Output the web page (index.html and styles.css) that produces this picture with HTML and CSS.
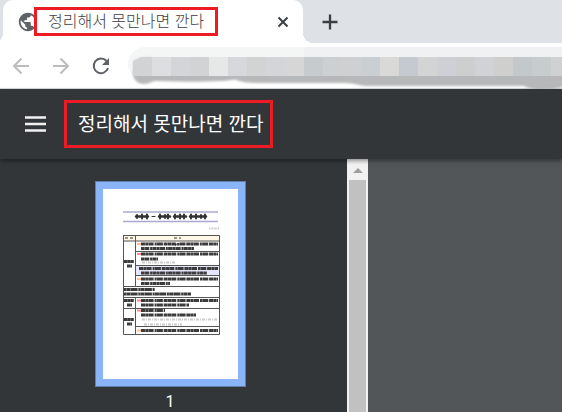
FILE: index.html
```html
<!DOCTYPE html>
<html lang="ko">
<head>
  <meta charset="UTF-8">
  <title>정리해서 못만나면 깐다</title>
  <link rel="stylesheet" href="styles.css">
</head>
<body>
  <div class="tab-strip">
    <div class="tab">
      <svg class="globe" viewBox="0 0 24 24" width="22" height="22"><path fill="#5f6368" d="M12 2C6.480 2 2 6.480 2 12s4.480 10 10 10 10-4.480 10-10S17.520 2 12 2zm-1 17.930c-3.950-.490-7-3.850-7-7.930 0-.620.080-1.210.210-1.790L9 15v1c0 1.100.900 2 2 2v1.930zm6.900-2.540c-.260-.810-1-1.390-1.900-1.390h-1v-3c0-.550-.450-1-1-1H8v-2h2c.550 0 1-.450 1-1V7h2c1.100 0 2-.900 2-2v-.410c2.930 1.190 5 4.060 5 7.410 0 2.080-.800 3.970-2.100 5.390z"/></svg>
      <span class="tab-title marked">정리해서 못만나면 깐다</span>
      <button class="icon-btn close" aria-label="닫기"><svg viewBox="0 0 12 12" width="12" height="12"><path d="M1.500 1.500l9 9M10.500 1.500l-9 9" stroke="#3c4043" stroke-width="2"/></svg></button>
    </div>
    <button class="icon-btn new-tab" aria-label="새 탭"><svg viewBox="0 0 16 16" width="16" height="16"><path d="M8 .5v15M.5 8h15" stroke="#3c4043" stroke-width="2.300"/></svg></button>
  </div>

  <div class="toolbar">
    <button class="icon-btn" aria-label="뒤로"><svg viewBox="0 0 18 18" width="18" height="18"><path d="M17 9H2.500M9.500 1.500L2 9l7.500 7.500" fill="none" stroke="#babcbe" stroke-width="2"/></svg></button>
    <button class="icon-btn" aria-label="앞으로"><svg viewBox="0 0 18 18" width="18" height="18"><path d="M1 9h14.500M8.500 1.500L16 9l-7.500 7.500" fill="none" stroke="#babcbe" stroke-width="2"/></svg></button>
    <button class="icon-btn" aria-label="새로고침"><svg viewBox="0 0 18 18" width="18" height="18"><path d="M14.500 4A7.300 7.300 0 1 0 16 11" fill="none" stroke="#5f6368" stroke-width="2"/><path d="M17 1v7h-7z" fill="#5f6368"/></svg></button>
    <svg class="address" viewBox="0 0 434 46" preserveAspectRatio="xMinYMin slice">
      <defs><filter id="soft" x="-5%" y="-20%" width="110%" height="140%"><feGaussianBlur stdDeviation="1"/></filter></defs>
      <path fill="#f4f6f6" d="M434 4H18C7 4 0 12 0 20s4 12 10 14h424z"/>
      <path fill="#f0f1f2" d="M176 4h258v10H176z"/>
      <path fill="#d7d8d8" filter="url(#soft)" d="M5 20c3-5 9-6 18-6v18H5z"/>
      <path fill="#b7b8b9" filter="url(#soft)" d="M5 30c0 7 5 11 11 11 5 0 8-3 12-3 24 1 50 1 66 0 6 0 10-2 14-1 5 2 12 3 20 3h88c12 0 14 3 24 3h156c8 5 28 4 44 0V28H5z"/>
      <path fill="#d2d3d4" d="M5 18l8-4h11v19H5z"/>
      <path fill="#dddee0" d="M24 14h19v19H24z"/>
      <path fill="#d4d5d8" d="M43 14h19v19H43z"/>
      <path fill="#d2d3d5" d="M62 14h19v19H62z"/>
      <path fill="#e6e8e8" d="M81 14h19v19H81z"/>
      <path fill="#d7d8db" d="M100 14h19v19h-19z"/>
      <path fill="#d2d4d3" d="M119 14h19v19h-19z"/>
      <path fill="#d2d6d9" d="M138 14h19v19h-19z"/>
      <path fill="#d6d6d6" d="M157 14h19v19h-19z"/>
      <path fill="#c6cbce" d="M176 14h19v19h-19z"/>
      <path fill="#cdd0d1" d="M195 14h19v19h-19z"/>
      <path fill="#cfd0d2" d="M214 14h19v19h-19z"/>
      <path fill="#cacfd2" d="M233 14h19v19h-19z"/>
      <path fill="#d9d9d7" d="M252 14h19v19h-19z"/>
      <path fill="#c5c9d0" d="M271 14h19v19h-19z"/>
      <path fill="#d3d5d5" d="M290 14h19v19h-19z"/>
      <path fill="#cfd0d5" d="M309 14h19v19h-19z"/>
      <path fill="#cccfcd" d="M328 14h19v19h-19z"/>
      <path fill="#d1d2d5" d="M347 14h19v19h-19z"/>
      <path fill="#cfcfcd" d="M366 14h19v19h-19z"/>
      <path fill="#c3c8ca" d="M385 14h19v19h-19z"/>
      <path fill="#c7cccd" d="M404 14h19v19h-19z"/>
      <path fill="#cfd1d2" d="M423 14h19v19h-19z"/>
    </svg>
  </div>

  <header class="pdf-header">
    <button class="icon-btn" aria-label="메뉴"><svg viewBox="0 0 21 16" width="21" height="16"><path d="M0 1.500h21M0 8h21M0 14.500h21" stroke="#f1f1f1" stroke-width="2.500"/></svg></button>
    <h1 class="pdf-title marked">정리해서 못만나면 깐다</h1>
  </header>

  <main class="viewer">
    <aside class="sidebar">
      <a class="thumb" href="#page1" aria-label="1 페이지">
        <svg viewBox="0 0 135 190">
          <path fill="#fff" d="M0 0h135v190H0z"/>
          <path d="M20 23h95M20 32.500h95" stroke="#aaa9cf" stroke-width="1.500"/>
          <g stroke="#333" stroke-linecap="round">
            <path d="M33 27.500h12M56 27.500h11M71 27.500h12M87 27.500h16" stroke-width="2.500"/>
            <path d="M34 26v3M39 25.500v4M44 25.500v4M57 25.500v4M62 26v3M65 25.500v4M72 25.500v4M77 25.500v4M81 25.500v4M88 25.500v4M93 25.500v4M98 26v3M102 25.500v4" stroke-width="2"/>
            <path d="M49 27.500h3" stroke-width="1"/>
          </g>
          <path d="M106 39.500h10" stroke="#ccc" stroke-width="2" stroke-dasharray="1 .5"/>
          <path fill="#fff8e8" d="M20 46h97v6H20z"/>
          <path fill="#e6e6fa" d="M32 77h85v9H32z"/>
          <g fill="none" stroke="#555">
            <path d="M20 46.500h96.500v99H20.500v-99M20 52h96M32.500 46v51M32 62.500h84M32 76.500h84M32 86.500h84M20 97.500h96M20 108.500h96M20 119.500h96M32 137.500h84M32.500 108v38"/>
          </g>
          <path d="M22 49h8M71 49h7" stroke="#99948b" stroke-width="2" stroke-dasharray="3 2"/>
          <g stroke="#3b3b3b" stroke-width="2.800">
            <path d="M38 55h34l1 .5 5-.5h37M38 65h77M36 79.500h79M38 90h77" stroke-dasharray="4 .3 3 .3 5 1 2 .3 6 .8"/>
            <path d="M38 59.500h53M38 70h17M38 84h66M38 94.500h29" stroke-dasharray="3 .3 5 .8 2 .3 4 .3"/>
            <path d="M21 100.500h31M21 105h67" stroke-dasharray="2 .3 4 .3 7 .7"/>
            <path d="M38 111.500h77M38 116h48M38 121.500h24M38 126h55M38 141.500h77" stroke-dasharray="4 .3 3 .3 5 1 2 .3 6 .8"/>
            <path d="M21 72.500h10M24 77h5M21 111.500h10M24 116h5M21 130.500h10M24 135h5" stroke-dasharray="3 .2"/>
          </g>
          <path d="M39 73.500h34M39 130.500h76M41 135.500h38" stroke="#ccc" stroke-width="2" stroke-dasharray="3 1 1 1"/>
          <path d="M34 55h4M34 90h4M34 141.500h4" stroke="#ffbd91" stroke-width="2"/>
          <path d="M34 65h4M34 111.500h4M34 121.500h4" stroke="#ff8d8d" stroke-width="2"/>
        </svg>
      </a>
      <span class="page-number">1</span>
    </aside>
    <div class="scrollbar">
      <svg viewBox="0 0 21 21" width="21" height="21"><path d="M6 14l5-5 5 5z" fill="#a0a0a0"/></svg>
      <div class="scroll-thumb"></div>
    </div>
    <div class="document"></div>
  </main>
</body>
</html>
```

FILE: styles.css
```css
* {
  box-sizing: border-box;
}
body {
  margin: 0;
  height: 100vh;
  display: flex;
  flex-direction: column;
  overflow: hidden;
  background: #525659;
  font-family: "Noto Sans CJK KR", sans-serif;
}
svg {
  display: block;
}
.icon-btn {
  display: flex;
  padding: 0;
  border: none;
  background: none;
  cursor: pointer;
}
.marked {
  border: 3px solid #ed1c24;
}
.tab-strip {
  display: flex;
  align-items: center;
  flex: none;
  height: 43px;
  padding-left: 3px;
  background: #dee1e6;
}
.tab {
  position: relative;
  display: flex;
  align-items: center;
  width: 300px;
  height: 43px;
  padding: 0 14px;
  border-radius: 10px 10px 0 0;
  background: #fff;
}
.tab::before,
.tab::after {
  content: "";
  position: absolute;
  bottom: 0;
  width: 10px;
  height: 10px;
}
.tab::before {
  right: 100%;
  background: radial-gradient(circle at 0 0, transparent 10px, #fff 10px);
}
.tab::after {
  left: 100%;
  background: radial-gradient(circle at 100% 0, transparent 10px, #fff 10px);
}
.globe {
  flex: none;
}
.tab-title {
  width: 184px;
  height: 29px;
  margin-left: -5px;
  padding-left: 11px;
  font-size: 16px;
  font-weight: 300;
  line-height: 21px;
  white-space: nowrap;
  color: #3c4043;
  background: #fff;
  z-index: 1;
}
.close {
  margin-left: auto;
}
.new-tab {
  margin-left: 19px;
}
.toolbar {
  display: flex;
  align-items: center;
  flex: none;
  gap: 22px;
  height: 46px;
  padding-left: 12px;
  border-bottom: 1px solid #dadce0;
  background: #fff;
}
.address {
  flex: 1;
  min-width: 0;
  height: 46px;
  margin-left: -4px;
}
.pdf-header {
  display: flex;
  align-items: center;
  flex: none;
  gap: 18px;
  height: 70px;
  padding-left: 25px;
  background: #323639;
  box-shadow: 0 2px 4px rgba(0, 0, 0, 0.4);
  z-index: 1;
}
.pdf-title {
  width: 209px;
  height: 48px;
  margin: 0;
  padding-left: 11px;
  font-size: 19px;
  font-weight: 400;
  line-height: 40px;
  white-space: nowrap;
  color: #fff;
}
.viewer {
  display: flex;
  flex: 1;
  min-height: 0;
}
.sidebar {
  display: flex;
  flex-direction: column;
  align-items: center;
  width: 347px;
  padding: 22px 7px 0 0;
  background: #323639;
}
.thumb {
  width: 151px;
  padding: 7px;
  border: 1px solid #5f7fae;
  background: #8ab4f8;
}
.page-number {
  margin-top: 4px;
  font-family: Roboto, sans-serif;
  font-size: 16px;
  line-height: 22px;
  color: #fff;
}
.scrollbar {
  display: flex;
  flex-direction: column;
  width: 21px;
  background: #f1f1f1;
}
.scroll-thumb {
  flex: 1;
  margin: 0 2px;
  background: #c1c1c1;
}
.document {
  flex: 1;
  background: #525659;
}
```
